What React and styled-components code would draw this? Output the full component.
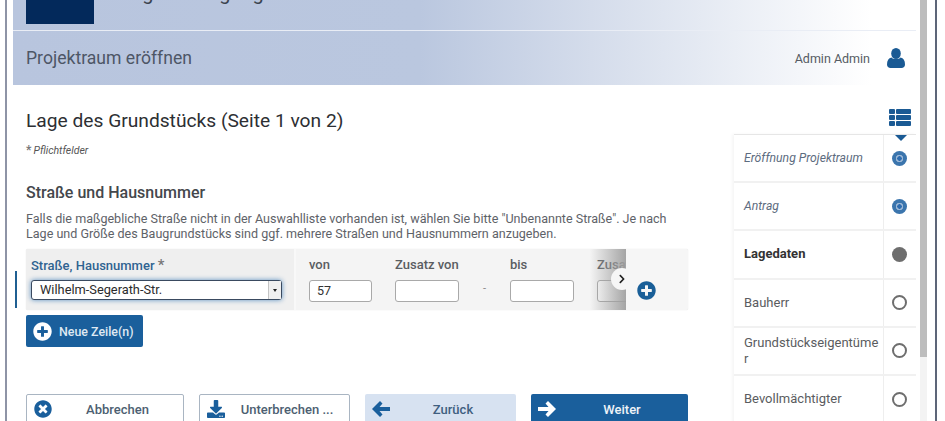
import React from "react";
import styled, { createGlobalStyle } from "styled-components";
import { FaPlusCircle, FaTimesCircle, FaDownload, FaChevronRight } from "react-icons/fa";

const Global = createGlobalStyle`
  html, body {
    margin: 0;
    padding: 0;
    height: 421px;
    overflow: hidden;
    background: #fff;
    font-family: Roboto, "Liberation Sans", sans-serif;
  }
`;

const Frame = styled.div`
  box-sizing: border-box;
  width: 945px;
  height: 421px;
  overflow: hidden;
  display: flex;
  padding-left: 5px;
  background: #fff;
`;

const LeftEdge = styled.div`
  width: 2px;
  background: #8e94a6;
  flex: none;
`;

const Page = styled.div`
  flex: none;
  width: 903px;
  margin-left: 6px;
`;

const ScrollTrack = styled.div`
  flex: none;
  width: 7px;
  margin-left: 4px;
  background: #f3f3f3;
`;

const ScrollThumb = styled.div`
  height: 357px;
  background: #bdbdbd;
`;

const OuterLine = styled.div`
  flex: none;
  width: 2px;
  margin-left: 8px;
  background: #5d6578;
`;

const Banner = styled.header`
  height: 85px;
  background: linear-gradient(90deg, #b8c5de 0%, #bac7df 45%, #dfe5f0 72%, #ffffff 95%);
`;

const TopRow = styled.div`
  height: 31px;
  box-sizing: border-box;
  padding-left: 13px;
  border-bottom: 1px solid #e9edf5;
  display: flex;
  gap: 14px;
  overflow: hidden;
`;

const Logo = styled.div`
  width: 68px;
  height: 24px;
  background: #03295b;
`;

const Brand = styled.div`
  font-size: 20px;
  line-height: 20px;
  margin-top: -17px;
  color: #3c4450;
  white-space: nowrap;
`;

const TitleRow = styled.div`
  height: 54px;
  display: flex;
  align-items: center;
  padding: 0 11px 0 13px;
`;

const PageTitle = styled.div`
  flex: 1;
  font-size: 17.6px;
  color: #4d5666;
`;

const UserName = styled.div`
  font-size: 12.5px;
  color: #555b63;
  margin-right: 17px;
`;

const Content = styled.div`
  display: flex;
`;

const Main = styled.main`
  flex: none;
  width: 662px;
  margin-left: 13px;
`;

const Heading = styled.h1`
  margin: 24px 0 0;
  font-size: 19.2px;
  line-height: 24px;
  font-weight: 400;
  color: #2d2f33;
`;

const Required = styled.div`
  margin-top: 11px;
  font-size: 10.5px;
  line-height: 12px;
  font-style: italic;
  color: #555;
  & b {
    font-style: normal;
    font-size: 12px;
    margin-right: 2px;
    color: #777;
  }
`;

const SubHeading = styled.h2`
  margin: 26px 0 0;
  font-size: 16px;
  line-height: 20px;
  font-weight: 500;
  color: #44474c;
`;

const Hint = styled.p`
  margin: 8px 0 0;
  font-size: 12.55px;
  line-height: 15px;
  color: #5e6268;
  white-space: nowrap;
`;

const RowWrap = styled.div`
  position: relative;
  margin-top: 8px;
`;

const Marker = styled.div`
  position: absolute;
  left: -11px;
  top: 22px;
  width: 2px;
  height: 37px;
  background: #1f5f92;
`;

const FieldRow = styled.div`
  position: relative;
  height: 61px;
  display: flex;
  background: #f4f4f4;
  border-radius: 2px;
  box-shadow: 0 0 1px #cfcfcf;
  overflow: hidden;
`;

const StreetCell = styled.div`
  flex: none;
  width: 270px;
  box-sizing: border-box;
  padding: 7px 0 0 5px;
  background: #efefef;
  border-right: 2px solid #f8f8f8;
`;

const Cell = styled.div`
  flex: none;
  width: ${(p) => p.$width}px;
  box-sizing: border-box;
  padding-top: 7px;
  margin-left: ${(p) => p.$gap || 0}px;
`;

const FieldLabel = styled.div`
  height: 18px;
  font-size: 13px;
  line-height: 18px;
  font-weight: 500;
  color: ${(p) => (p.$accent ? "#2f6391" : "#5a5d62")};
  white-space: nowrap;
  & span {
    font-size: 15px;
    color: #777;
  }
`;

const Select = styled.div`
  position: relative;
  box-sizing: border-box;
  width: 251px;
  height: 20px;
  margin-top: 6px;
  padding-left: 8px;
  background: #fff;
  border: 1px solid #3a4a60;
  border-radius: 3px;
  box-shadow: 0 0 5px #5b8fc0;
  font-size: 12.8px;
  line-height: 18px;
  color: #2b2b2b;
`;

const SelectArrow = styled.div`
  position: absolute;
  right: 0;
  top: 0;
  width: 12px;
  height: 18px;
  background: #f0f0f0;
  border-left: 1px solid #c4c4c4;
  display: flex;
  align-items: center;
  justify-content: center;
  &::after {
    content: "";
    border-left: 2px solid transparent;
    border-right: 2px solid transparent;
    border-top: 3px solid #222;
  }
`;

const Input = styled.div`
  box-sizing: border-box;
  width: ${(p) => p.$width}px;
  height: 22px;
  margin-top: 6px;
  padding-left: 7px;
  background: #fff;
  border: 1px solid #a9a9a9;
  border-radius: 3px;
  font-size: 12.5px;
  line-height: 20px;
  color: #333;
`;

const Dash = styled.div`
  flex: none;
  width: 51px;
  padding-top: 33px;
  text-align: center;
  font-size: 11px;
  color: #888;
`;

const ScrollShade = styled.div`
  position: absolute;
  left: 564px;
  top: 0;
  bottom: 0;
  width: 36px;
  background: linear-gradient(90deg, rgba(170, 170, 170, 0) 0%, rgba(160, 160, 160, 0.95) 100%);
`;

const AddArea = styled.div`
  position: absolute;
  right: 0;
  top: 0;
  bottom: 0;
  width: 62px;
  box-sizing: border-box;
  padding: 0 22px 10px 0;
  background: #f6f6f6;
  color: #1a5f98;
  font-size: 19px;
  display: flex;
  align-items: flex-end;
  justify-content: center;
`;

const ScrollButton = styled.div`
  position: absolute;
  left: 585px;
  top: 19px;
  width: 22px;
  height: 22px;
  border-radius: 50%;
  background: #f6f6f6;
  color: #222;
  font-size: 10px;
  display: flex;
  align-items: center;
  justify-content: center;
`;

const AddRow = styled.div`
  display: flex;
  width: fit-content;
  align-items: center;
  gap: 7px;
  height: 32px;
  margin-top: 5px;
  padding: 0 9px 0 7px;
  background: #1a5f9c;
  border-radius: 2px;
  color: #dfe8f2;
  font-size: 12.4px;
  font-weight: 500;
  & svg {
    font-size: 19px;
    color: #fff;
  }
`;

const Actions = styled.div`
  display: flex;
  margin-top: 47px;
`;

const Action = styled.div`
  flex: none;
  box-sizing: border-box;
  width: ${(p) => p.$width}px;
  height: 30px;
  margin-right: ${(p) => p.$after}px;
  padding-left: 7px;
  display: flex;
  align-items: center;
  border-radius: 2px;
  font-size: 13px;
  font-weight: 500;
  background: ${(p) => (p.$kind === "solid" ? "#1a5f9c" : p.$kind === "soft" ? "#d7e2f1" : "#fff")};
  color: ${(p) => (p.$kind === "solid" ? "#eef3f8" : p.$kind === "soft" ? "#3f5f80" : "#4d5f72")};
  border: ${(p) => (p.$kind ? "none" : "1px solid #a9b5c2")};
  & svg {
    flex: none;
    font-size: 18px;
    color: ${(p) => (p.$kind === "solid" ? "#fff" : "#1a5f9c")};
  }
  & span {
    flex: 1;
    text-align: center;
    white-space: nowrap;
  }
`;

const Side = styled.aside`
  flex: none;
  width: 182px;
  margin-left: 46px;
  padding-top: 24px;
`;

const SideIcon = styled.div`
  height: 25px;
  display: flex;
  justify-content: flex-end;
  padding-right: 5px;
`;

const Steps = styled.div`
  position: relative;
  border-top: 1px solid #e6e6e6;
  box-shadow: -2px 0 3px rgba(0, 0, 0, 0.04);
`;

const Notch = styled.div`
  position: absolute;
  right: 9px;
  top: 0;
  border-left: 6px solid transparent;
  border-right: 6px solid transparent;
  border-top: 6px solid #1a5a94;
`;

const Step = styled.div`
  display: flex;
  box-sizing: border-box;
  height: 48.2px;
  border-bottom: 2px solid #f1f1f1;
`;

const StepLabel = styled.div`
  box-sizing: border-box;
  width: 150px;
  padding: 0 4px 0 10px;
  border-right: 1px solid #eeeeee;
  display: flex;
  align-items: center;
  font-size: ${(p) => (p.$state === "done" ? "12.2px" : "13px")};
  line-height: 16px;
  word-break: break-all;
  font-style: ${(p) => (p.$state === "done" ? "italic" : "normal")};
  font-weight: ${(p) => (p.$state === "current" ? 700 : 400)};
  color: ${(p) => (p.$state === "done" ? "#5d6c80" : p.$state === "current" ? "#333" : "#5a5c60")};
`;

const StepMark = styled.div`
  flex: 1;
  display: flex;
  align-items: center;
  justify-content: center;
  padding-right: 1px;
`;

const Dot = styled.div`
  box-sizing: border-box;
  width: 15px;
  height: 15px;
  border-radius: 50%;
  ${(p) => p.$state === "done" && "background: radial-gradient(circle, #2d6cb0 0 2px, #9db8d6 2.5px 3.5px, #3b75ad 4px);"}
  ${(p) => p.$state === "current" && "background: #6e6e6e;"}
  ${(p) => p.$state === "open" && "border: 2px solid #6e6e6e;"}
`;

const UserIcon = () => (
  <svg width="18" height="20" viewBox="0 0 18 20" fill="#1a5a94">
    <ellipse cx="9" cy="5.5" rx="4.8" ry="5.5" />
    <path d="M4.5 9.5C6 11.5 12 11.5 13.5 9.5 16.5 10 18 12.5 18 16.5 18 18.8 16.5 20 14.5 20H3.5C1.5 20 0 18.8 0 16.5 0 12.5 1.5 10 4.5 9.5Z" />
  </svg>
);

const ListIcon = () => (
  <svg width="22" height="17" viewBox="0 0 22 17" fill="#1a5a94">
    <rect x="0" y="0" width="6" height="5" rx="1" />
    <rect x="7" y="0" width="15" height="5" rx="1" />
    <rect x="0" y="6" width="6" height="5" rx="1" />
    <rect x="7" y="6" width="15" height="5" rx="1" />
    <rect x="0" y="12" width="6" height="5" rx="1" />
    <rect x="7" y="12" width="15" height="5" rx="1" />
  </svg>
);

const ArrowIcon = ({ flip }) => (
  <svg width="18" height="18" viewBox="0 0 18 18" fill="currentColor" style={flip ? { transform: "scaleX(-1)" } : undefined}>
    <path d="M10 1 18 9 10 17 7.5 14.5 10.5 11H0V7H10.5L7.5 3.5Z" />
  </svg>
);

const steps = [
  { label: "Eröffnung Projektraum", state: "done" },
  { label: "Antrag", state: "done" },
  { label: "Lagedaten", state: "current" },
  { label: "Bauherr", state: "open" },
  { label: "Grundstückseigentümer", state: "open" },
  { label: "Bevollmächtigter", state: "open" },
];

export default function App() {
  return (
    <Frame>
      <Global />
      <LeftEdge />
      <Page>
        <Banner>
          <TopRow>
            <Logo />
            <Brand>Baugenehmigung</Brand>
          </TopRow>
          <TitleRow>
            <PageTitle>Projektraum eröffnen</PageTitle>
            <UserName>Admin Admin</UserName>
            <UserIcon />
          </TitleRow>
        </Banner>
        <Content>
          <Main>
            <Heading>Lage des Grundstücks (Seite 1 von 2)</Heading>
            <Required><b>*</b>Pflichtfelder</Required>
            <SubHeading>Straße und Hausnummer</SubHeading>
            <Hint>
              Falls die maßgebliche Straße nicht in der Auswahlliste vorhanden ist, wählen Sie bitte "Unbenannte Straße". Je nach
              <br />
              Lage und Größe des Baugrundstücks sind ggf. mehrere Straßen und Hausnummern anzugeben.
            </Hint>
            <RowWrap>
              <Marker />
              <FieldRow>
                <StreetCell>
                  <FieldLabel $accent>Straße, Hausnummer <span>*</span></FieldLabel>
                  <Select>
                    Wilhelm-Segerath-Str.
                    <SelectArrow />
                  </Select>
                </StreetCell>
                <Cell $width={86} $gap={13}>
                  <FieldLabel>von</FieldLabel>
                  <Input $width={63}>57</Input>
                </Cell>
                <Cell $width={64}>
                  <FieldLabel>Zusatz von</FieldLabel>
                  <Input $width={64} />
                </Cell>
                <Dash>-</Dash>
                <Cell $width={64}>
                  <FieldLabel>bis</FieldLabel>
                  <Input $width={64} />
                </Cell>
                <Cell $width={64} $gap={23}>
                  <FieldLabel>Zusatz</FieldLabel>
                  <Input $width={64} />
                </Cell>
                <ScrollShade />
                <AddArea><FaPlusCircle /></AddArea>
                <ScrollButton><FaChevronRight /></ScrollButton>
              </FieldRow>
            </RowWrap>
            <AddRow><FaPlusCircle />Neue Zeile(n)</AddRow>
            <Actions>
              <Action $width={158} $after={15}><FaTimesCircle /><span>Abbrechen</span></Action>
              <Action $width={151} $after={15}><FaDownload /><span>Unterbrechen ...</span></Action>
              <Action $width={151} $after={15} $kind="soft"><ArrowIcon flip /><span>Zurück</span></Action>
              <Action $width={157} $after={0} $kind="solid"><ArrowIcon /><span>Weiter</span></Action>
            </Actions>
          </Main>
          <Side>
            <SideIcon><ListIcon /></SideIcon>
            <Steps>
              <Notch />
              {steps.map((step) => (
                <Step key={step.label}>
                  <StepLabel $state={step.state}>{step.label}</StepLabel>
                  <StepMark><Dot $state={step.state} /></StepMark>
                </Step>
              ))}
            </Steps>
          </Side>
        </Content>
      </Page>
      <ScrollTrack><ScrollThumb /></ScrollTrack>
      <OuterLine />
    </Frame>
  );
}
